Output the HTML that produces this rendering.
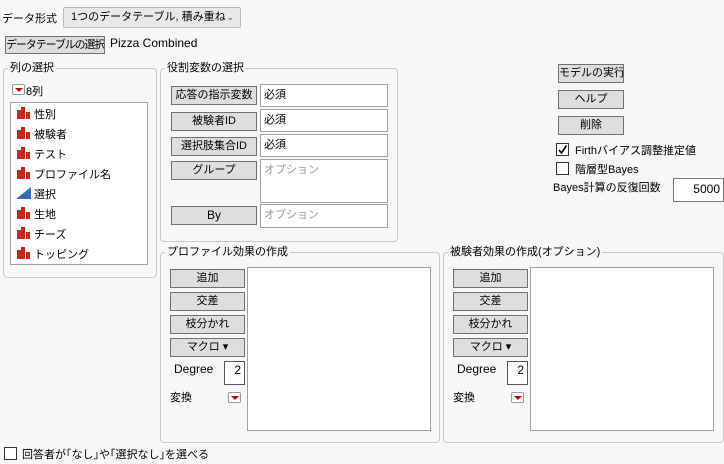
<!DOCTYPE html>
<html><head><meta charset="utf-8"><style>
*{box-sizing:border-box;margin:0;padding:0}
body{width:724px;height:464px;background:#f7f7f7;font-family:"Liberation Sans","Noto Sans CJK JP",sans-serif;font-size:11px;color:#000;position:relative;overflow:hidden}
.a{position:absolute;white-space:nowrap}
.l{font-size:12px}
.btn{position:absolute;background:#dedede;border:1px solid #707070;text-align:center;line-height:17px;font-size:11px;white-space:nowrap;overflow:hidden}
.fs{position:absolute;border:1px solid #c8c8c8;border-radius:4px}
.lg{position:absolute;background:#f7f7f7;padding:0 2px;line-height:14px;top:-8px;left:4px;white-space:nowrap}
.inp{position:absolute;background:#fff;border:1px solid #a0a0a0;padding:2px 3px;line-height:16px;white-space:nowrap}
.ph{color:#999}
.cb{position:absolute;width:13px;height:13px;border:1px solid #333;background:#fff}
.rd{position:absolute;width:13px;height:11px;border:1px solid #999;border-radius:2px;background:#fff}
.rd:after{content:"";position:absolute;left:2px;top:3px;border-left:4px solid transparent;border-right:4px solid transparent;border-top:4px solid #c00}
.bar{position:absolute;left:6px;width:14px;height:12px}
.bar i{position:absolute;bottom:0;background:#c8281e;width:4px}
</style></head><body>
<div class="a" style="left:2px;top:10px">データ形式</div>
<div class="a" style="left:63px;top:7px;width:178px;height:21px;background:#e8e8e8;border:1px solid #bbb;border-radius:2px;padding-left:7px;line-height:19px">1つのデータテーブル, 積み重ね<span style="position:absolute;right:6px;top:0;font-size:9px;color:#555">⌄</span></div>
<div class="btn" style="left:5px;top:36px;width:100px;height:18px;letter-spacing:-1.1px;padding:0">データテーブルの選択</div>
<div class="a l" style="left:110px;top:36px">Pizza Combined</div>

<div class="fs" style="left:3px;top:68px;width:154px;height:210px"><div class="lg">列の選択</div></div>
<div class="rd" style="left:12px;top:84px"></div>
<div class="a" style="left:26px;top:83px">8列</div>
<div class="a" style="left:10px;top:102px;width:138px;height:163px;background:#fff;border:1px solid #a0a0a0">
<div style="position:relative;height:100%">
<div class="bar" style="top:4px"><i style="left:0;height:9px"></i><i style="left:4px;height:12px"></i><i style="left:9px;height:7px"></i></div><div class="a" style="left:23px;top:3px">性別</div>
<div class="bar" style="top:24px"><i style="left:0;height:9px"></i><i style="left:4px;height:12px"></i><i style="left:9px;height:7px"></i></div><div class="a" style="left:23px;top:23px">被験者</div>
<div class="bar" style="top:44px"><i style="left:0;height:9px"></i><i style="left:4px;height:12px"></i><i style="left:9px;height:7px"></i></div><div class="a" style="left:23px;top:43px">テスト</div>
<div class="bar" style="top:64px"><i style="left:0;height:9px"></i><i style="left:4px;height:12px"></i><i style="left:9px;height:7px"></i></div><div class="a" style="left:23px;top:63px">プロファイル名</div>
<svg class="a" style="left:5px;top:84px" width="15" height="12"><polygon points="0,12 15,0 15,12" fill="#3a68b8"/></svg><div class="a" style="left:23px;top:83px">選択</div>
<div class="bar" style="top:104px"><i style="left:0;height:9px"></i><i style="left:4px;height:12px"></i><i style="left:9px;height:7px"></i></div><div class="a" style="left:23px;top:103px">生地</div>
<div class="bar" style="top:124px"><i style="left:0;height:9px"></i><i style="left:4px;height:12px"></i><i style="left:9px;height:7px"></i></div><div class="a" style="left:23px;top:123px">チーズ</div>
<div class="bar" style="top:144px"><i style="left:0;height:9px"></i><i style="left:4px;height:12px"></i><i style="left:9px;height:7px"></i></div><div class="a" style="left:23px;top:143px">トッピング</div>
</div></div>

<div class="fs" style="left:160px;top:68px;width:238px;height:174px"><div class="lg">役割変数の選択</div></div>
<div class="btn" style="left:171px;top:86px;width:86px;height:19px">応答の指示変数</div>
<div class="inp" style="left:260px;top:84px;width:128px;height:23px">必須</div>
<div class="btn" style="left:171px;top:112px;width:86px;height:19px">被験者ID</div>
<div class="inp" style="left:260px;top:109px;width:128px;height:23px">必須</div>
<div class="btn" style="left:171px;top:137px;width:86px;height:19px">選択肢集合ID</div>
<div class="inp" style="left:260px;top:134px;width:128px;height:23px">必須</div>
<div class="btn" style="left:171px;top:161px;width:86px;height:19px">グループ</div>
<div class="inp ph" style="left:260px;top:159px;width:128px;height:44px">オプション</div>
<div class="btn l" style="left:171px;top:206px;width:86px;height:19px;font-size:12px">By</div>
<div class="inp ph" style="left:260px;top:204px;width:128px;height:24px">オプション</div>

<div class="btn" style="left:558px;top:64px;width:66px;height:19px">モデルの実行</div>
<div class="btn" style="left:558px;top:90px;width:66px;height:19px">ヘルプ</div>
<div class="btn" style="left:558px;top:116px;width:66px;height:19px">削除</div>
<div class="cb" style="left:556px;top:143px"><svg width="11" height="11" style="position:absolute;left:0;top:0"><path d="M2 6 L4.5 9 L9.5 1.5" stroke="#000" stroke-width="1.6" fill="none"/></svg></div>
<div class="a" style="left:575px;top:142px">Firthバイアス調整推定値</div>
<div class="cb" style="left:556px;top:162px"></div>
<div class="a" style="left:575px;top:161px">階層型Bayes</div>
<div class="a" style="left:553px;top:179px">Bayes計算の反復回数</div>
<div class="inp l" style="left:673px;top:178px;width:51px;height:24px;text-align:right;border-color:#777">5000</div>

<div class="fs" style="left:160px;top:252px;width:280px;height:191px"><div class="lg">プロファイル効果の作成</div></div>
<div class="btn" style="left:170px;top:269px;width:75px;height:19px">追加</div>
<div class="btn" style="left:170px;top:292px;width:75px;height:19px">交差</div>
<div class="btn" style="left:170px;top:315px;width:75px;height:19px">枝分かれ</div>
<div class="btn" style="left:170px;top:338px;width:75px;height:19px">マクロ ▾</div>
<div class="a l" style="left:174px;top:362px">Degree</div>
<div class="inp l" style="left:224px;top:361px;width:21px;height:24px;text-align:right;padding:0 3px;border-color:#555">2</div>
<div class="a" style="left:170px;top:389px">変換</div>
<div class="rd" style="left:228px;top:392px"></div>
<div class="a" style="left:247px;top:267px;width:184px;height:164px;background:#fff;border:1px solid #a0a0a0"></div>

<div class="fs" style="left:443px;top:252px;width:281px;height:191px"><div class="lg">被験者効果の作成(オプション)</div></div>
<div class="btn" style="left:453px;top:269px;width:75px;height:19px">追加</div>
<div class="btn" style="left:453px;top:292px;width:75px;height:19px">交差</div>
<div class="btn" style="left:453px;top:315px;width:75px;height:19px">枝分かれ</div>
<div class="btn" style="left:453px;top:338px;width:75px;height:19px">マクロ ▾</div>
<div class="a l" style="left:457px;top:362px">Degree</div>
<div class="inp l" style="left:507px;top:361px;width:21px;height:24px;text-align:right;padding:0 3px;border-color:#555">2</div>
<div class="a" style="left:453px;top:389px">変換</div>
<div class="rd" style="left:511px;top:392px"></div>
<div class="a" style="left:530px;top:267px;width:184px;height:164px;background:#fff;border:1px solid #a0a0a0"></div>

<div class="cb" style="left:4px;top:447px"></div>
<div class="a" style="left:22px;top:446px">回答者が｢なし｣や｢選択なし｣を選べる</div>
</body></html>
